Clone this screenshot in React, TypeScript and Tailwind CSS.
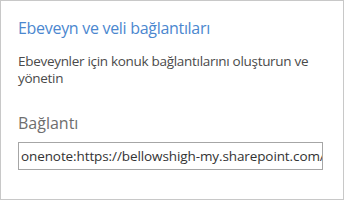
export default function App() {
  return (
    <div className="w-[344px] h-[200px] border border-[#c8c8c8] bg-white pl-[17px] pr-[21px] pt-[16px] font-['Open_Sans',sans-serif]">
      <h1 className="text-[16px] leading-[22px] text-[#4b87cf] tracking-[-0.3px]">Ebeveyn ve veli bağlantıları</h1>
      <p className="mt-[14px] text-[13.5px] leading-[17px] text-[#4a4a4a] tracking-[-0.3px]">
        Ebeveynler için konuk bağlantılarını oluşturun ve yönetin
      </p>
      <div className="mt-[25px] text-[16px] leading-[22px] text-[#6e6e6e]">Bağlantı</div>
      <div className="mt-[8px] h-[28px] w-[305px] border border-[#a6a6a6] overflow-hidden whitespace-nowrap pl-[2px] text-[13.5px] leading-[26px] text-[#333] tracking-[-0.1px]">
        onenote:https://bellowshigh-my.sharepoint.com/
      </div>
    </div>
  );
}
